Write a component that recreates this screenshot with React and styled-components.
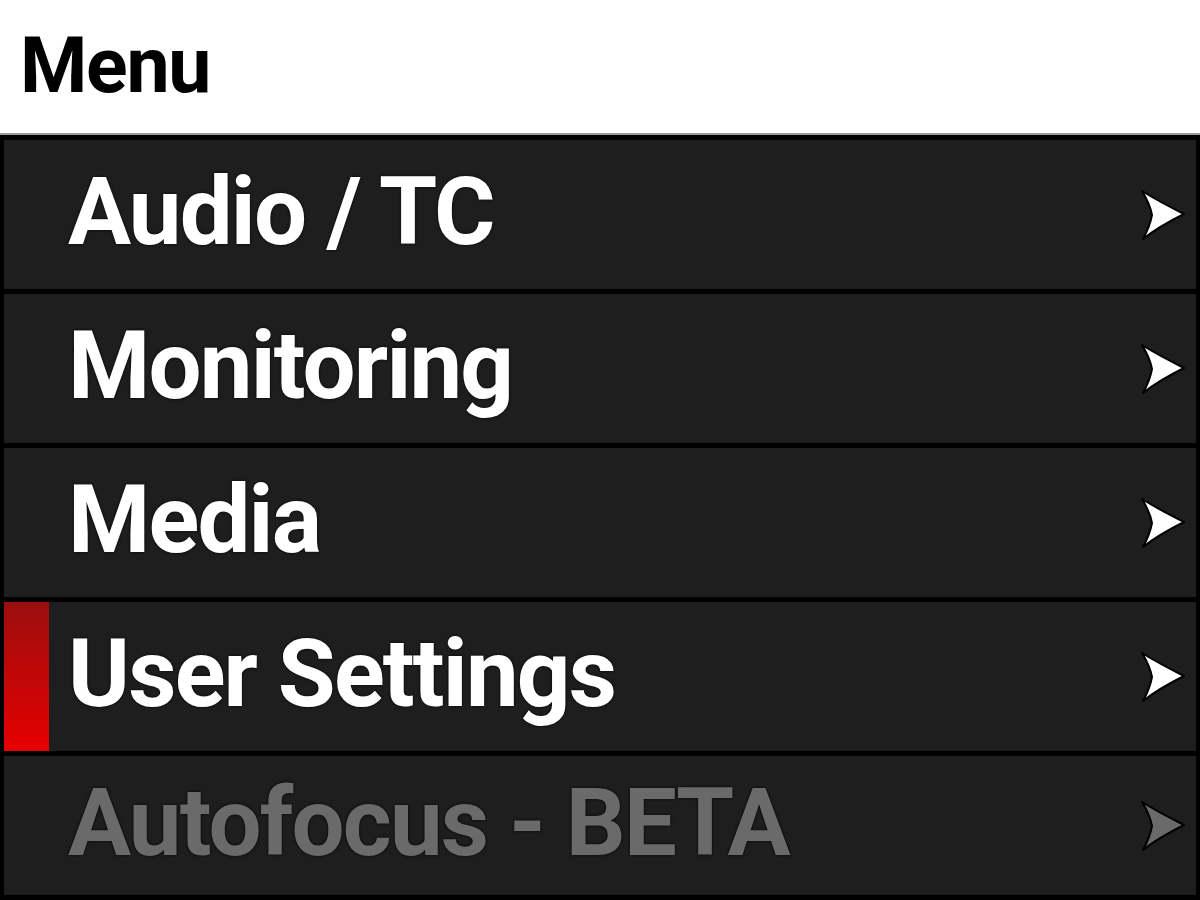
import React from 'react';
import styled, { createGlobalStyle } from 'styled-components';

const GlobalStyle = createGlobalStyle`
  html, body {
    margin: 0;
    padding: 0;
    width: 1200px;
    height: 900px;
    overflow: hidden;
    background: #000;
  }
  * {
    box-sizing: border-box;
  }
`;

const items = [
  { label: 'Audio / TC' },
  { label: 'Monitoring' },
  { label: 'Media' },
  { label: 'User Settings', active: true },
  { label: 'Autofocus - BETA', disabled: true },
];

// arrowhead pointing right, with the notched back
const Arrow = ({ color }) => (
  <svg width="48" height="54" viewBox="0 0 48 54">
    <path
      d="M4 3 Q20 13 46 26 Q20 39 5 51 Q12 38 14 27 Q12 16 4 3 Z"
      fill={color}
      stroke="#000"
      strokeWidth="2"
      strokeLinejoin="round"
    />
  </svg>
);

const App = () => {
  return (
    <Screen>
      <GlobalStyle />
      <Header>
        <h1>Menu</h1>
      </Header>
      <List>
        {items.map((item) => (
          <Row key={item.label} $last={item.disabled}>
            <Marker $active={item.active} />
            <Label $disabled={item.disabled}>{item.label}</Label>
            <Arrow color={item.disabled ? '#6a6a6a' : '#ffffff'} />
          </Row>
        ))}
      </List>
    </Screen>
  );
};

export default App;

const Screen = styled.div`
  width: 1200px;
  height: 900px;
  display: flex;
  flex-direction: column;
  font-family: Roboto, 'Liberation Sans', sans-serif;
  background: #000;
`;

const Header = styled.div`
  height: 135px;
  background: #fff;
  border-bottom: 2px solid #9a9a9a;
  display: flex;
  align-items: center;
  padding-left: 20px;
  h1 {
    margin: 0;
    font-size: 77px;
    font-weight: 700;
    color: #000;
    letter-spacing: -1.3px;
    line-height: 1;
  }
`;

const List = styled.div`
  flex: 1;
  display: flex;
  flex-direction: column;
  gap: 5px;
  padding: 5px 4px 5px 4px;
  min-height: 0;
`;

const Row = styled.div`
  height: ${(p) => (p.$last ? 'auto' : '149px')};
  flex: ${(p) => (p.$last ? '1' : 'none')};
  background: #1e1e1e;
  display: flex;
  align-items: center;
  padding-right: 10px;
`;

const Marker = styled.div`
  width: 45px;
  align-self: stretch;
  margin-right: 19px;
  background: ${(p) =>
    p.$active ? 'linear-gradient(to bottom, #9c0e0e, #e60000)' : 'transparent'};
`;

const Label = styled.div`
  flex: 1;
  font-size: 94px;
  font-weight: 700;
  line-height: 1;
  margin-top: -6px;
  letter-spacing: -1.8px;
  color: ${(p) => (p.$disabled ? '#6a6a6a' : '#ffffff')};
  text-shadow: 0 0 3px #000;
  white-space: nowrap;
`;
